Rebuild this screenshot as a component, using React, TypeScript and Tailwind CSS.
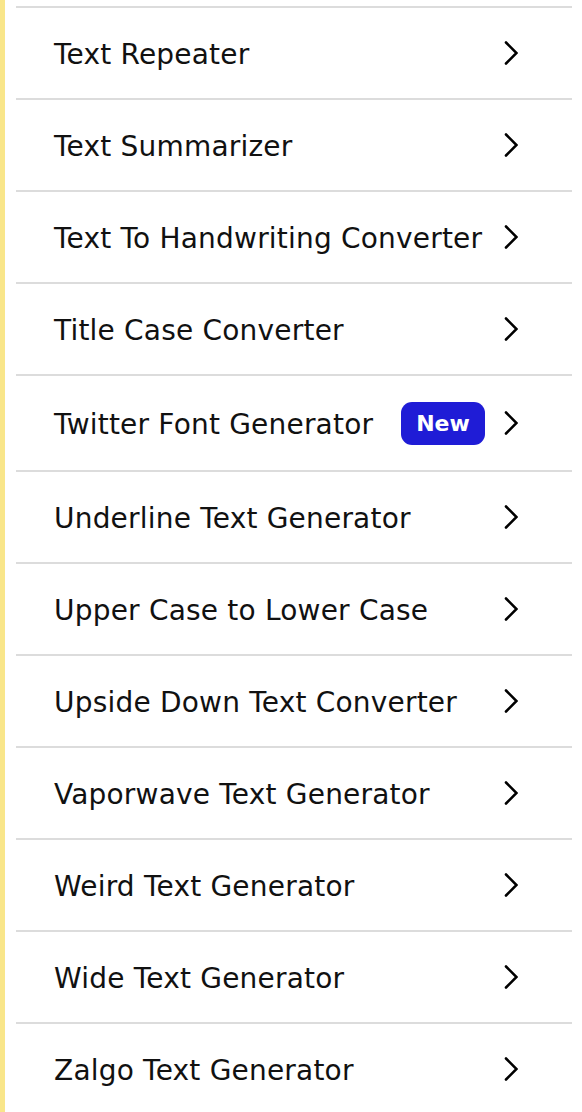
const items = [
  'Text Repeater',
  'Text Summarizer',
  'Text To Handwriting Converter',
  'Title Case Converter',
  'Twitter Font Generator',
  'Underline Text Generator',
  'Upper Case to Lower Case',
  'Upside Down Text Converter',
  'Vaporwave Text Generator',
  'Weird Text Generator',
  'Wide Text Generator',
  'Zalgo Text Generator',
];

function Chevron() {
  return (
    <svg width="14" height="24" viewBox="0 0 14 24" className="shrink-0">
      <polyline points="2,1.5 12.5,12 2,22.5" fill="none" stroke="#000" strokeWidth="2.6" strokeLinecap="round" strokeLinejoin="miter" />
    </svg>
  );
}

export default function App() {
  return (
    <div className="flex min-h-[1112px] w-[582px] bg-white" style={{ fontFamily: '"DejaVu Sans", Verdana, sans-serif' }}>
      <div className="w-[5px] shrink-0 bg-[#f9e68a]" />
      <div className="flex-1 pl-[11px] pr-[10px] pt-[6px]">
        {items.map((label) => {
          const isNew = label === 'Twitter Font Generator';
          return (
            <div
              key={label}
              className={`flex items-center border-t-2 border-[#dcdcdc] pl-[38px] pr-[54px] ${isNew ? 'h-[96px]' : 'h-[92px]'}`}
            >
              <span className="flex-1 whitespace-nowrap pt-[3px] text-[28px] leading-none tracking-[0.2px] text-[#111]">{label}</span>
              {isNew && (
                <span className="mr-[19px] flex h-[43px] w-[84px] items-center justify-center rounded-[11px] bg-[#1f1cd6] text-[22px] font-bold text-white">
                  New
                </span>
              )}
              <Chevron />
            </div>
          );
        })}
      </div>
    </div>
  );
}
